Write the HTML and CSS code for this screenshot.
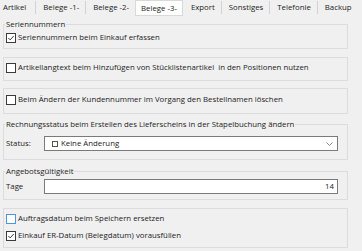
FILE: index.html
```html
<!DOCTYPE html>
<html lang="de">
<head>
  <meta charset="UTF-8">
  <title>Einstellungen</title>
  <link rel="stylesheet" href="styles.css">
</head>
<body>
  <div class="tabs">
    <div class="tab first">Artikel</div>
    <div class="tab">Belege -1-</div>
    <div class="tab">Belege -2-</div>
    <div class="tab active">Belege -3-</div>
    <div class="tab">Export</div>
    <div class="tab">Sonstiges</div>
    <div class="tab">Telefonie</div>
    <div class="tab last">Backup</div>
  </div>

  <div class="page">
    <fieldset class="group g1">
      <legend>Seriennummern</legend>
      <label class="check">
        <span class="box"><svg viewBox="0 0 9 9"><path d="M1.5 4.5 L3.6 6.6 L7.6 2.2"/></svg></span>
        Seriennummern beim Einkauf erfassen
      </label>
    </fieldset>

    <fieldset class="group g2">
      <label class="check">
        <span class="box"></span>
        Artikellangtext beim Hinzufügen von Stücklistenartikel&nbsp; in den Positionen nutzen
      </label>
    </fieldset>

    <fieldset class="group g3">
      <label class="check">
        <span class="box"></span>
        Beim Ändern der Kundennummer im Vorgang den Bestellnamen löschen
      </label>
    </fieldset>

    <fieldset class="group g4">
      <legend>Rechnungsstatus beim Erstellen des Lieferscheins in der Stapelbuchung ändern</legend>
      <div class="field">
        <span class="label">Status:</span>
        <div class="select">
          <span class="status-icon"></span>
          <span class="value">Keine Änderung</span>
          <svg class="chevron" viewBox="0 0 7 4"><path d="M0.5 0.5 L3.5 3.5 L6.5 0.5"/></svg>
        </div>
      </div>
    </fieldset>

    <fieldset class="group g5">
      <legend>Angebotsgültigkeit</legend>
      <div class="field">
        <span class="label">Tage</span>
        <div class="input">14</div>
      </div>
    </fieldset>

    <fieldset class="group g6">
      <label class="check">
        <span class="box focus"></span>
        Auftragsdatum beim Speichern ersetzen
      </label>
      <label class="check">
        <span class="box"><svg viewBox="0 0 9 9"><path d="M1.5 4.5 L3.6 6.6 L7.6 2.2"/></svg></span>
        Einkauf ER-Datum (Belegdatum) vorausfüllen
      </label>
    </fieldset>
  </div>
</body>
</html>
```

FILE: styles.css
```css
:root {
  --bg: #f0f0f0;
  --text: #222;
  --group-border: #dcdcdc;
  --tab-sep: #d2d2d2;
  --control-border: #7a7a7a;
}

body {
  margin: 0;
  width: 362px;
  height: 251px;
  overflow: hidden;
  background-color: var(--bg);
  color: var(--text);
  font-family: 'Open Sans', sans-serif;
  font-size: 7.8px;
  line-height: 11px;
}

/* tab strip */
.tabs {
  display: flex;
  height: 16px;
}

.tab {
  padding: 0 6px 0 7px;
  line-height: 13px;
  border-right: 1px solid var(--tab-sep);
  margin: 1px 0 2px;
  white-space: nowrap;
}

.tab.first {
  padding: 0 9px 0 3px;
}

.tab.active {
  background-color: #fff;
  border: 1px solid #d9d9d9;
  margin: 0 1px 0 -1px;
  padding: 0 5px;
  line-height: 14px;
}

.tab.last {
  border-right: none;
}

/* group boxes */
.page {
  padding-left: 3px;
}

.group {
  margin: 0 14px 0 0;
  padding: 0 2px;
  min-width: 0;
  border: 1px solid var(--group-border);
}

.group legend {
  padding: 0 1px;
  margin-left: -1px;
}

.g1 { margin-top: 3px; padding-top: 2px; padding-bottom: 5px; }
.g2 { margin-top: 8px; padding-top: 4px; padding-bottom: 7px; }
.g3 { margin-top: 7px; padding-top: 5px; padding-bottom: 8px; }
.g4 { margin-top: 5px; padding-top: 6px; padding-bottom: 8px; }
.g5 { margin-top: 6px; padding-top: 2px; padding-bottom: 5px; }
.g6 {
  margin-top: 8px;
  padding-top: 4px;
  padding-bottom: 6px;
  display: flex;
  flex-direction: column;
  gap: 6px;
}

/* checkboxes */
.check {
  display: flex;
  align-items: center;
  white-space: nowrap;
}

.box {
  width: 8px;
  height: 8px;
  margin-right: 2px;
  border: 1px solid #3a3a3a;
  background-color: #fff;
  flex: none;
}

.box.focus {
  border-color: #4f95de;
}

.box svg {
  display: block;
  width: 8px;
  height: 8px;
}

.box path {
  fill: none;
  stroke: #222;
  stroke-width: 1;
}

/* label + control rows */
.field {
  display: flex;
  align-items: center;
}

.field .label {
  width: 38px;
  flex: none;
}

.select,
.input {
  flex: 1;
  height: 13px;
  margin-right: 7px;
  border: 1px solid var(--control-border);
  background-color: #fff;
  display: flex;
  align-items: center;
}

.select {
  padding: 0 4px 0 7px;
}

.status-icon {
  width: 4px;
  height: 4px;
  border: 1px solid #555;
  margin-right: 3px;
}

.select .value {
  flex: 1;
}

.chevron {
  width: 7px;
  height: 4px;
}

.chevron path {
  fill: none;
  stroke: #888;
  stroke-width: 1;
}

.input {
  justify-content: flex-end;
  padding-right: 3px;
}
```
